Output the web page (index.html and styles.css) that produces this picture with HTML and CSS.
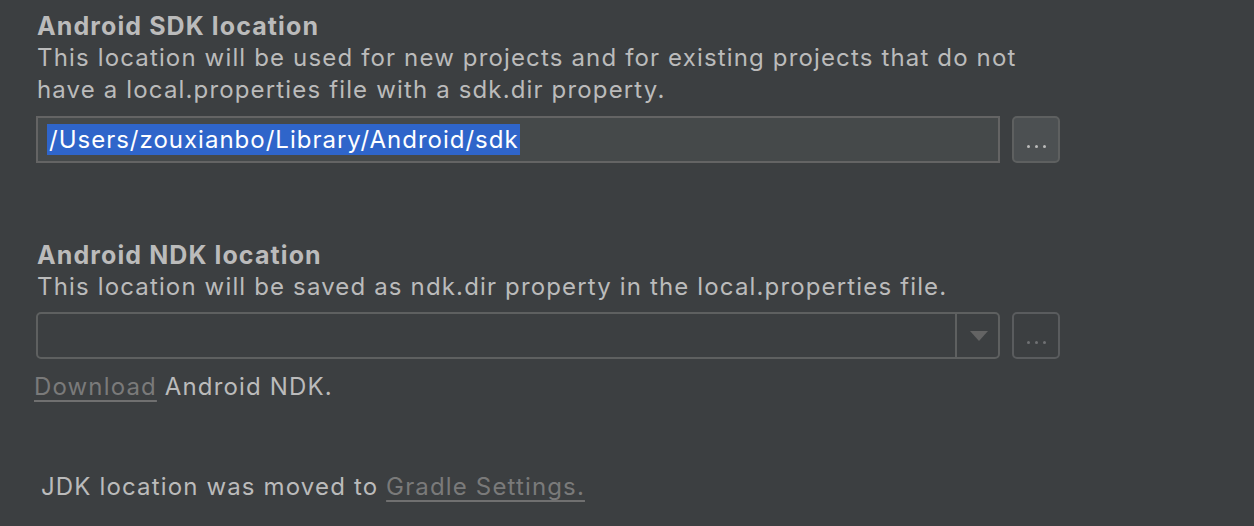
FILE: index.html
```html
<!DOCTYPE html>
<html>
<head>
<meta charset="utf-8">
<link rel="stylesheet" href="styles.css">
</head>
<body>
<div class="page">
  <section class="group sdk">
    <div class="title">Android SDK location</div>
    <div class="desc">This location will be used for new projects and for existing projects that do not<br>have a local.properties file with a sdk.dir property.</div>
    <div class="row">
      <div class="field"><span class="sel">/Users/zouxianbo/Library/Android/sdk</span></div>
      <div class="browse"><span class="dot"></span><span class="dot"></span><span class="dot"></span></div>
    </div>
  </section>
  <section class="group ndk">
    <div class="title">Android NDK location</div>
    <div class="desc">This location will be saved as ndk.dir property in the local.properties file.</div>
    <div class="row combo-row">
      <div class="combo">
        <div class="combo-text"></div>
        <div class="combo-arrow"><svg width="18" height="10" viewBox="0 0 18 10"><path d="M0 0 L18 0 L9 10 Z" fill="#646464"/></svg></div>
      </div>
      <div class="browse disabled"><span class="dot"></span><span class="dot"></span><span class="dot"></span></div>
    </div>
    <div class="download"><span class="link">Download</span> Android NDK.</div>
  </section>
  <div class="jdk">JDK location was moved to <span class="link">Gradle Settings.</span></div>
</div>
</body>
</html>
```
FILE: styles.css
```css
html, body {
  margin: 0;
  padding: 0;
  background: #3c3f41;
}
body {
  font-family: Inter, "Noto Sans", sans-serif;
  font-size: 24px;
  letter-spacing: 1.15px;
  color: #bbbbbb;
  line-height: 32px;
}
.page {
  padding: 11px 0 0 36px;
  width: 1025px;
}
.title {
  font-weight: 700;
  font-size: 25px;
  letter-spacing: 1.1px;
  padding-left: 1px;
  line-height: 31px;
}
.desc {
  padding-left: 1px;
}
.row {
  display: flex;
  gap: 12px;
  margin-top: 10px;
}
.combo-row {
  margin-top: 9px;
}
.field {
  border: 2px solid #646464;
  background: #45494a;
  padding: 6px 0 0 9px;
  box-sizing: border-box;
  height: 47px;
  width: 964px;
}
.sel {
  display: inline-block;
  vertical-align: top;
  letter-spacing: 1px;
  background: #2f65ca;
  color: #ffffff;
  height: 31px;
  line-height: 31px;
  padding: 0 1px 0 2px;
}
.browse {
  width: 48px;
  height: 47px;
  box-sizing: border-box;
  border: 2px solid #5e6060;
  border-radius: 5px;
  background: #4c5052;
  display: flex;
  justify-content: center;
  align-items: flex-end;
  gap: 5px;
  padding-bottom: 13px;
}
.dot {
  width: 3px;
  height: 3px;
  border-radius: 50%;
  background: #bbbbbb;
}
.browse.disabled {
  background: transparent;
  border-color: #5a5c5e;
}
.browse.disabled .dot {
  background: #6f7173;
}
.ndk {
  margin-top: 77px;
}
.combo {
  width: 964px;
  height: 47px;
  box-sizing: border-box;
  border: 2px solid #5e6060;
  border-radius: 5px;
  display: flex;
}
.combo-text {
  flex: 1;
}
.combo-arrow {
  width: 43px;
  box-sizing: border-box;
  border-left: 2px solid #5e6060;
  display: flex;
  align-items: center;
  justify-content: center;
  padding-left: 2px;
}
.download {
  margin-top: 12px;
  margin-left: -2px;
}
.link {
  color: #7a7a7a;
  text-decoration: underline;
  text-decoration-color: #707070;
  text-decoration-thickness: 2px;
  text-underline-offset: 5px;
}
.jdk {
  margin-top: 68px;
  padding-left: 5px;
}
```
